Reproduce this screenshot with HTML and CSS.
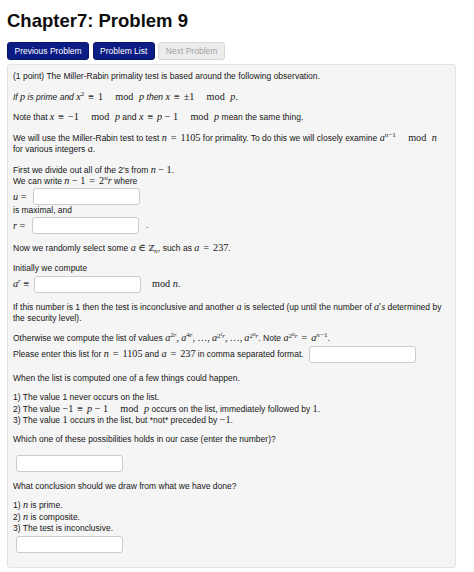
FILE: index.html
```html
<!DOCTYPE html>
<html>
<head>
<meta charset="utf-8">
<title>Chapter7: Problem 9</title>
<link rel="stylesheet" href="styles.css">
</head>
<body>
<div class="page">
  <h1 class="title">Chapter7: Problem 9</h1>
  <div class="nav">
    <span class="btn btn-primary">Previous Problem</span>
    <span class="btn btn-primary">Problem List</span>
    <span class="btn btn-disabled">Next Problem</span>
  </div>
  <div class="problem">
    <p>(1 point) The Miller-Rabin primality test is based around the following observation.</p>
    <p class="raised"><em>If <span class="m"><i>p</i></span> is prime and</em> <span class="m"><i>x</i><sup>2</sup> <span class="r">≡</span> 1<span class="mod">mod</span><i>p</i></span> <em>then</em> <span class="m"><i>x</i> <span class="r">≡</span> ±1<span class="mod">mod</span><i>p</i>.</span></p>
    <p>Note that <span class="m"><i>x</i> <span class="r">≡</span> −1<span class="mod">mod</span><i>p</i></span> and <span class="m"><i>x</i> <span class="r">≡</span> <i>p</i> − 1<span class="mod">mod</span><i>p</i></span> mean the same thing.</p>
    <p><span class="nw">We will use the Miller-Rabin test to test <span class="m"><i>n</i> <span class="r">=</span> 1105</span> for primality. To do this we will closely examine <span class="m"><i>a</i><sup><i>n</i>−1</sup><span class="mod">mod</span><i>n</i></span></span><br>for various integers <span class="m"><i>a</i></span>.</p>
    <div class="blk">
      <div class="ln">First we divide out all of the 2's from <span class="m"><i>n</i> − 1</span>.</div>
      <div class="ln">We can write <span class="m"><i>n</i> − 1 <span class="r">=</span> 2<sup><i>u</i></sup><i>r</i></span> where</div>
      <div class="fline"><span class="m lbl"><i>u</i>&nbsp;=</span><input type="text" class="ans"></div>
      <div class="ln">is maximal, and</div>
      <div class="fline"><span class="m lbl lbl-r"><i>r</i>&nbsp;=</span><input type="text" class="ans"><span class="dot">.</span></div>
    </div>
    <p>Now we randomly select some <span class="m"><i>a</i> ∈ <span class="bb">ℤ</span><sub><i>n</i></sub></span>, such as <span class="m"><i>a</i> <span class="r">=</span> 237</span>.</p>
    <div class="blk">
      <div class="ln">Initially we compute</div>
      <div class="fline tall"><span class="m lbl lbl-a"><i>a</i><sup><i>r</i></sup>&nbsp;≡</span><input type="text" class="ans"><span class="m mod-after">mod <i>n</i>.</span></div>
    </div>
    <p><span class="nw">If this number is 1 then the test is inconclusive and another <span class="m"><i>a</i></span> is selected (up until the number of <span class="m"><i>a</i>′<i>s</i></span> determined by</span><br>the security level).</p>
    <div class="blk">
      <div class="ln">Otherwise we compute the list of values <span class="m"><i>a</i><sup>2<i>r</i></sup>,&#8201;<i>a</i><sup>4<i>r</i></sup>,&#8201;…,&#8201;<i>a</i><sup>2<sup><i>i</i></sup><i>r</i></sup>,&#8201;…,&#8201;<i>a</i><sup>2<sup><i>u</i></sup><i>r</i></sup></span>. Note <span class="m"><i>a</i><sup>2<sup><i>u</i></sup><i>r</i></sup> <span class="r">=</span> <i>a</i><sup><i>n</i>−1</sup></span>.</div>
      <div class="fline taller"><span class="ln">Please enter this list for <span class="m"><i>n</i> <span class="r">=</span> 1105</span> and <span class="m"><i>a</i> <span class="r">=</span> 237</span> in comma separated format.</span><input type="text" class="ans ans-inline"></div>
    </div>
    <p class="tight">When the list is computed one of a few things could happen.</p>
    <p class="tight">1) The value 1 never occurs on the list.<br>
      2) The value <span class="m">−1 <span class="r">≡</span> <i>p</i> − 1<span class="mod">mod</span><i>p</i></span> occurs on the list, immediately followed by <span class="m">1</span>.<br>
      3) The value <span class="m">1</span> occurs in the list, but *not* preceded by <span class="m">−1</span>.</p>
    <p>Which one of these possibilities holds in our case (enter the number)?</p>
    <div class="boxrow"><input type="text" class="ans ans-indent"></div>
    <p class="tight">What conclusion should we draw from what we have done?</p>
    <div class="blk">
      <div class="ln">1) <span class="m"><i>n</i></span> is prime.</div>
      <div class="ln">2) <span class="m"><i>n</i></span> is composite.</div>
      <div class="ln">3) The test is inconclusive.</div>
      <div class="fline taller"><input type="text" class="ans ans-indent"></div>
    </div>
  </div>
</div>
</body>
</html>
```

FILE: styles.css
```css
body {
  margin: 0;
  background: #ffffff;
  font-family: "Liberation Sans", Arial, sans-serif;
  color: #151515;
}

.page {
  padding: 0 7px;
}

.title {
  margin: 10px 0 10px;
  font-size: 18.5px;
  line-height: 22px;
  font-weight: bold;
  color: #0d0d0d;
}

.nav {
  display: flex;
  gap: 3.5px;
  margin-bottom: 4px;
}

.btn {
  box-sizing: border-box;
  height: 18px;
  padding: 0 6.5px;
  border: 1px solid;
  border-radius: 3px;
  font-size: 8.5px;
  line-height: 16px;
}

.btn-primary {
  background: #0b1d84;
  border-color: #081567;
  color: #ffffff;
}

.btn-disabled {
  background: #ececec;
  border-color: #d8d8d8;
  color: #a3a3a3;
}

.problem {
  width: 449px;
  box-sizing: border-box;
  background: #f5f5f5;
  border: 1px solid #e3e3e3;
  border-radius: 3px;
  padding: 5.5px 5px 5px;
  font-size: 8.5px;
  line-height: 11.7px;
}

.problem p,
.blk {
  margin: 0 0 8.5px;
}

.problem p.raised {
  padding-top: 1.5px;
}

.problem p.tight {
  margin-bottom: 7.5px;
}

.nw {
  white-space: nowrap;
}

.ln {
  display: block;
}

.fline {
  display: flex;
  align-items: center;
  height: 17.5px;
}

.fline.tall {
  height: 18px;
}

.fline.taller {
  height: 19px;
}

.m {
  font-family: "Liberation Serif", "DejaVu Serif", "Times New Roman", serif;
  font-size: 10.2px;
  font-style: normal;
  line-height: 1;
}

.m i {
  font-style: italic;
}

.r {
  padding: 0 0.14em;
}

.mod {
  margin-left: 1.2em;
  margin-right: 0.55em;
}

.mod-after {
  margin-left: 11px;
}

.m sup {
  font-size: 70%;
  line-height: 0;
  vertical-align: 0.5em;
}

.m sup sup {
  font-size: 75%;
  vertical-align: 0.45em;
}

.m sub {
  font-size: 70%;
  line-height: 0;
  vertical-align: -0.25em;
}

.bb {
  font-family: "DejaVu Serif", serif;
  font-size: 80%;
}

.lbl {
  flex: 0 0 auto;
  box-sizing: border-box;
  width: 20px;
  white-space: nowrap;
}

.lbl-r {
  width: 19px;
}

.lbl-a {
  width: 21px;
}

.ans {
  flex: 0 0 auto;
  box-sizing: border-box;
  width: 107px;
  height: 17px;
  margin: 0;
  padding: 0 4px;
  border: 1px solid #cccccc;
  border-radius: 3px;
  background: #ffffff;
  font-size: 8.5px;
}

.ans-inline {
  margin-left: 5px;
}

.ans-indent {
  margin-left: 3px;
}

.dot {
  margin-left: 7px;
}

.boxrow {
  display: flex;
  height: 17px;
  margin: 0 0 9px;
}
```
